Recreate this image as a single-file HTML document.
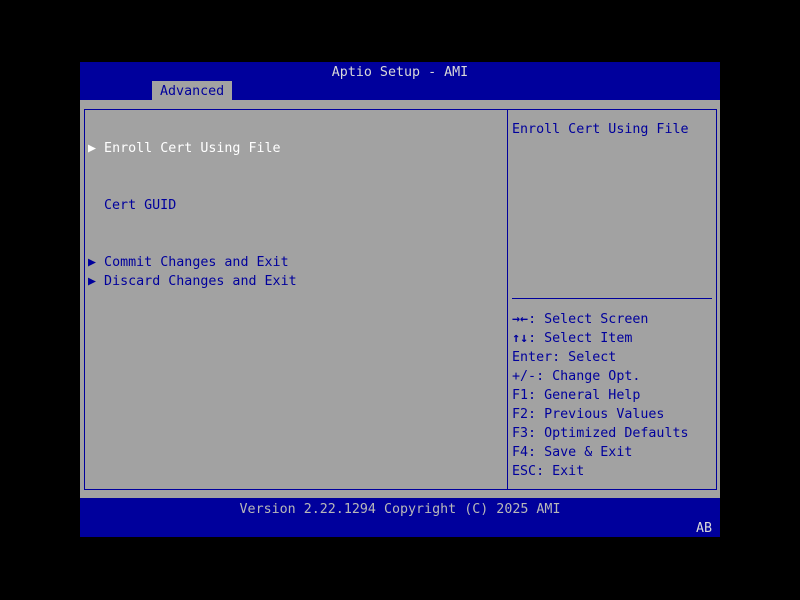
<!DOCTYPE html>
<html><head><style>
body{margin:0;width:800px;height:600px;background:#000;position:relative;overflow:hidden;font-family:"DejaVu Sans Mono","Liberation Mono",monospace;font-size:13.33px;}
div{position:absolute;}
.t{white-space:pre;line-height:19px;height:19px;}
.blue{background:#00009c;}
</style></head><body>
<div class="blue" style="left:80px;top:62px;width:640px;height:38px;"></div>
<div class="t" style="left:80px;top:63px;width:640px;text-align:center;color:#d8d8d8;">Aptio Setup - AMI</div>
<div style="left:152px;top:81px;width:80px;height:19px;background:#a2a2a2;"></div>
<div class="t" style="left:160px;top:82px;color:#00009c;">Advanced</div>
<div style="left:80px;top:100px;width:640px;height:398px;background:#a2a2a2;"></div>
<div style="left:84px;top:109px;width:422px;height:379px;border:1px solid #00009c;"></div>
<div style="left:507px;top:109px;width:208px;height:379px;border:1px solid #00009c;"></div>
<div style="left:512px;top:298px;width:200px;height:1px;background:#00009c;"></div>
<div class="t" style="left:88px;top:139px;color:#fff;">▶ Enroll Cert Using File</div>
<div class="t" style="left:104px;top:196px;color:#00009c;">Cert GUID</div>
<div class="t" style="left:88px;top:253px;color:#00009c;">▶ Commit Changes and Exit</div>
<div class="t" style="left:88px;top:272px;color:#00009c;">▶ Discard Changes and Exit</div>
<div class="t" style="left:512px;top:120px;color:#00009c;">Enroll Cert Using File</div>
<div class="t" style="left:512px;top:310px;color:#00009c;line-height:19px;height:auto;"><b>→←</b>: Select Screen
<b>↑↓</b>: Select Item
Enter: Select
+/-: Change Opt.
F1: General Help
F2: Previous Values
F3: Optimized Defaults
F4: Save &amp; Exit
ESC: Exit</div>
<div class="blue" style="left:80px;top:498px;width:640px;height:39px;"></div>
<div class="t" style="left:80px;top:500px;width:640px;text-align:center;color:#b8b8b8;">Version 2.22.1294 Copyright (C) 2025 AMI</div>
<div class="t" style="left:696px;top:519px;color:#d8d8d8;">AB</div>
</body></html>
